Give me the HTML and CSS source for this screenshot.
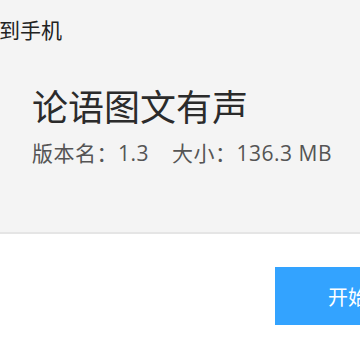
FILE: index.html
```html
<!DOCTYPE html>
<html lang="zh-CN">
<head>
<meta charset="utf-8">
<link rel="stylesheet" href="styles.css">
</head>
<body>
<div class="panel">
  <div class="header">安装到手机</div>
  <div class="info">
    <div class="title">论语图文有声</div>
    <div class="meta"><span>版本名：1.3</span><span>大小：136.3 MB</span></div>
  </div>
</div>
<div class="actions">
  <button class="start">开始安装</button>
</div>
</body>
</html>
```
FILE: styles.css
```css
html, body {
  margin: 0;
  padding: 0;
  background: #ffffff;
  overflow: hidden;
  font-family: "Open Sans", "Noto Sans CJK SC", sans-serif;
}
.panel {
  background: #f4f4f4;
  height: 232px;
  border-bottom: 2px solid #e5e5e5;
  overflow: hidden;
}
.header {
  margin-left: -43px;
  padding-top: 16px;
  font-size: 21px;
  line-height: 28px;
  color: #222;
  white-space: nowrap;
}
.info {
  padding: 42px 0 0 32px;
}
.title {
  font-size: 36px;
  line-height: 44px;
  color: #2b2b2b;
}
.meta {
  margin-top: 9px;
  font-size: 21px;
  line-height: 28px;
  letter-spacing: 0.5px;
  color: #555;
  display: flex;
  gap: 23px;
  white-space: nowrap;
}
.actions {
  display: flex;
  justify-content: flex-end;
  padding-top: 33px;
  margin-right: -110px;
}
.start {
  border: none;
  background: #33a3ff;
  color: #fff;
  font-family: "Noto Sans CJK SC", sans-serif;
  font-size: 20px;
  height: 58px;
  width: 195px;
  padding: 0 0 0 53px;
  text-align: left;
}
```
